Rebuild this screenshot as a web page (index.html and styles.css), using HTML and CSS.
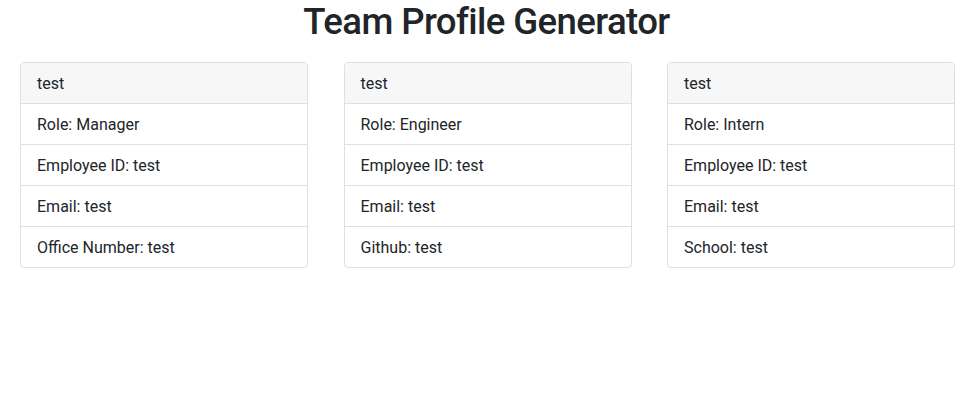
FILE: index.html
```html
<!DOCTYPE html>
<html lang="en">
<head>
<meta charset="utf-8">
<title>Team Profile Generator</title>
<link rel="stylesheet" href="styles.css">
</head>
<body>
<h1 class="title">Team Profile Generator</h1>
<div class="cards">
  <div class="card">
    <div class="card-header">test</div>
    <ul class="list">
      <li class="item">Role: Manager</li>
      <li class="item">Employee ID: test</li>
      <li class="item">Email: test</li>
      <li class="item">Office Number: test</li>
    </ul>
  </div>
  <div class="card">
    <div class="card-header">test</div>
    <ul class="list">
      <li class="item">Role: Engineer</li>
      <li class="item">Employee ID: test</li>
      <li class="item">Email: test</li>
      <li class="item">Github: test</li>
    </ul>
  </div>
  <div class="card">
    <div class="card-header">test</div>
    <ul class="list">
      <li class="item">Role: Intern</li>
      <li class="item">Employee ID: test</li>
      <li class="item">Email: test</li>
      <li class="item">School: test</li>
    </ul>
  </div>
</div>
</body>
</html>
```
FILE: styles.css
```css
* { box-sizing: border-box; }
body {
  margin: 0;
  font-family: Roboto, "Liberation Sans", sans-serif;
  font-size: 16px;
  line-height: 1.5;
  color: #212529;
  background: #fff;
}
.title {
  margin: 0 0 18px;
  text-align: center;
  font-size: 36.6px;
  font-weight: 500;
  line-height: 44px;
  letter-spacing: -0.6px;
}
.cards {
  display: grid;
  grid-template-columns: repeat(3, 288px);
  column-gap: 35.5px;
  padding-left: 20px;
}
.card {
  border: 1px solid #dfdfdf;
  border-radius: 4px;
  overflow: hidden;
}
.card-header {
  padding: 9px 16px 7px;
  background: #f7f7f7;
  border-bottom: 1px solid #dfdfdf;
}
.list {
  list-style: none;
  margin: 0;
  padding: 0;
}
.item {
  padding: 9px 16px 7px;
  border-bottom: 1px solid #dfdfdf;
}
.item:last-child { border-bottom: 0; }
```
